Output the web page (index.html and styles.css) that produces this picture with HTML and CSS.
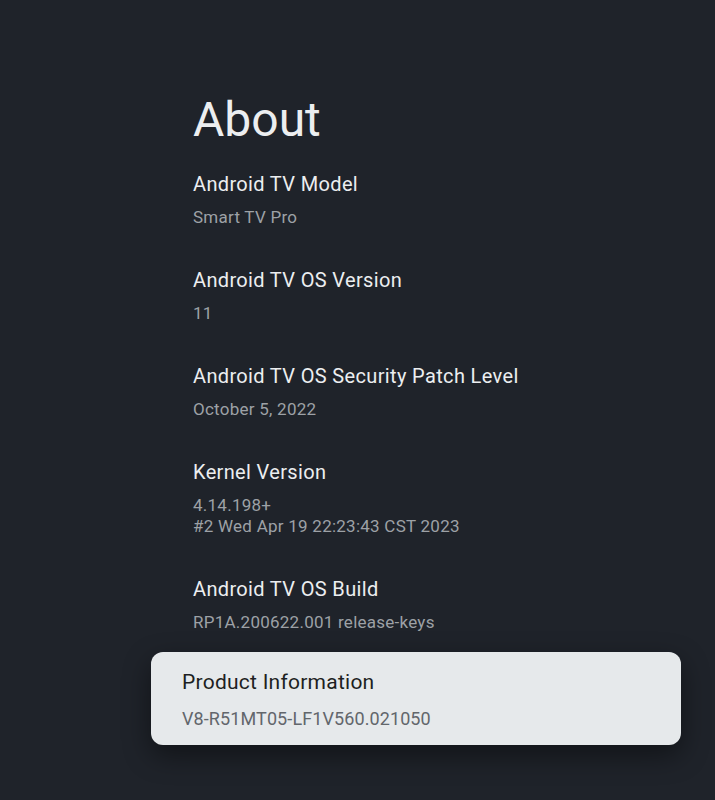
FILE: index.html
```html
<!DOCTYPE html>
<html lang="en">
<head>
<meta charset="utf-8">
<title>About</title>
<link rel="stylesheet" href="styles.css">
</head>
<body>
<main class="panel">
  <h1 class="heading">About</h1>
  <ul class="list">
    <li class="row">
      <div class="title">Android TV Model</div>
      <div class="sub">Smart TV Pro</div>
    </li>
    <li class="row">
      <div class="title">Android TV OS Version</div>
      <div class="sub">11</div>
    </li>
    <li class="row">
      <div class="title">Android TV OS Security Patch Level</div>
      <div class="sub">October 5, 2022</div>
    </li>
    <li class="row">
      <div class="title">Kernel Version</div>
      <div class="sub">4.14.198+<br>#2 Wed Apr 19 22:23:43 CST 2023</div>
    </li>
    <li class="row">
      <div class="title">Android TV OS Build</div>
      <div class="sub">RP1A.200622.001 release-keys</div>
    </li>
    <li class="row focused">
      <div class="title">Product Information</div>
      <div class="sub">V8-R51MT05-LF1V560.021050</div>
    </li>
  </ul>
</main>
</body>
</html>
```
FILE: styles.css
```css
html, body {
  margin: 0;
  padding: 0;
  background: #1f232a;
  height: 100%;
  overflow: hidden;
}
body {
  font-family: Roboto, "Noto Sans", sans-serif;
}
.panel {
  width: 530px;
  margin-left: 151px;
  padding-top: 88px;
}
.heading {
  margin: 0 0 0 42px;
  font-size: 48px;
  font-weight: 400;
  line-height: 64px;
  color: #eceef0;
}
.list {
  list-style: none;
  margin: 1px 0 0 0;
  padding: 0;
  display: flex;
  flex-direction: column;
  gap: 3px;
}
.row {
  padding: 17px 31px 18px 42px;
  display: flex;
  flex-direction: column;
  gap: 9px;
  border-radius: 12px;
}
.title {
  font-size: 20px;
  line-height: 28px;
  letter-spacing: 0.35px;
  color: #eceef0;
}
.sub {
  font-size: 17px;
  line-height: 21px;
  letter-spacing: 0.25px;
  color: #9da1a6;
}
.row.focused {
  margin-top: -2px;
  padding: 16.3px 31px 15.2px 31px;
  gap: 10.5px;
  background: #e6e9eb;
  box-shadow: 0 10px 28px rgba(0, 0, 0, 0.45);
}
.row.focused .title {
  font-size: 21px;
  line-height: 29px;
  letter-spacing: 0.25px;
  color: #1d1f22;
}
.row.focused .sub {
  font-size: 18px;
  line-height: 22px;
  letter-spacing: 0.1px;
  color: #62666b;
}
```
